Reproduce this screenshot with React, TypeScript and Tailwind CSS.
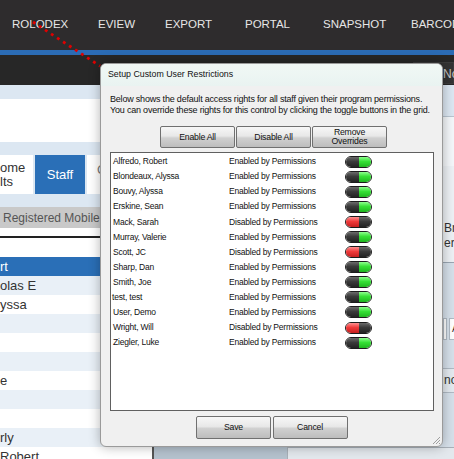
import React from 'react';

const staff: [string, boolean][] = [
  ['Alfredo, Robert', true],
  ['Blondeaux, Alyssa', true],
  ['Bouvy, Alyssa', true],
  ['Erskine, Sean', true],
  ['Mack, Sarah', false],
  ['Murray, Valerie', true],
  ['Scott, JC', false],
  ['Sharp, Dan', true],
  ['Smith, Joe', true],
  ['test, test', true],
  ['User, Demo', true],
  ['Wright, Will', false],
  ['Ziegler, Luke', true],
];

const nav: [string, string][] = [
  ['ROLODEX', 'w-[86px]'],
  ['EVIEW', 'w-[67px]'],
  ['EXPORT', 'w-[80px]'],
  ['PORTAL', 'w-[78px]'],
  ['SNAPSHOT', 'w-[88px]'],
  ['BARCODE', 'w-[90px]'],
];

const leftRows = ['rt', 'olas E', 'yssa', '', '', '', 'e', '', '', 'rly', 'Robert'];

const darkHalf = 'bg-[linear-gradient(to_bottom,#6a6a6a,#3a3a3a_45%,#222222)]';
const greenHalf = 'bg-[linear-gradient(to_bottom,#8cff8c,#35e035_45%,#1fb51f)]';
const redHalf = 'bg-[linear-gradient(to_bottom,#ff9090,#f03a3a_45%,#c41f1f)]';

function Toggle({ on }: { on: boolean }) {
  return (
    <div className="flex h-[12px] w-[27px] overflow-hidden rounded-full border border-[#1c1c1c]">
      <div className={`w-1/2 ${on ? darkHalf : redHalf}`} />
      <div className={`w-1/2 ${on ? greenHalf : darkHalf}`} />
    </div>
  );
}

function WinButton({ children }: { children: React.ReactNode }) {
  return (
    <button className="flex h-full w-[75px] items-center justify-center rounded-[2px] border border-[#707070] bg-[linear-gradient(to_bottom,#f7f7f7,#e8e8e8_45%,#d0d0d0_55%,#bdbdbd)] text-center text-[8.7px] leading-[9px] text-[#111]">
      {children}
    </button>
  );
}

export default function App() {
  return (
    <div className="relative h-[459px] w-[454px] overflow-hidden bg-white font-['Liberation_Sans',sans-serif]">
      {/* top nav */}
      <div className="flex h-[50px] items-center bg-[#2e2c2d] pl-[12px] text-[11.5px] text-[#e6e6e6]">
        {nav.map(([label, w]) => (
          <div key={label} className={`shrink-0 ${w}`}>{label}</div>
        ))}
      </div>
      <div className="h-[5px] bg-[#2b6cb5]" />
      <div className="flex h-[30px] justify-end bg-[#272727]">
        <div className="mt-[7px] h-[22px] w-[41px] border border-[#3c3c3c] bg-[#333333] pl-[29px] pt-[4px] text-[12px] leading-[14px] text-[#c8c8c8]">No</div>
      </div>
      <div className="h-[14px] bg-[#dce7f2]" />

      <div className="flex">
        {/* left list panel */}
        <div className="w-[152px] shrink-0 text-[13px] text-[#333]">
          <div className="h-[43px] bg-white" />
          <div className="flex h-[65px] gap-[2px] bg-[#dce7f2] pt-[13px]">
            <div className="flex h-[39px] w-[33px] flex-col justify-center bg-white leading-[14px]">
              <span>ome</span>
              <span>lts</span>
            </div>
            <div className="flex h-[39px] w-[50px] items-center justify-center bg-[#2a6fb7] text-[13px] text-white">Staff</div>
            <div className="h-[39px] w-[60px] bg-white pl-[10px] pt-[5px] text-[#777]">C</div>
          </div>
          <div className="flex h-[21px] items-center bg-[#c9c9c9] pl-[3px] text-[12px] text-[#555]">Registered Mobile</div>
          <div className="h-[8px]" />
          <div className="h-[2px] bg-[#222]" />
          <div className="h-[19px]" />
          {leftRows.map((t, i) => (
            <div
              key={i}
              className={`flex h-[19px] items-center ${i === 0 ? 'bg-[#2a6fb7] text-white' : i % 2 === 1 ? 'bg-[#e9f0f7]' : 'bg-white'}`}
            >
              {t}
            </div>
          ))}
        </div>

        {/* right detail panel (mostly hidden) */}
        <div className="flex flex-1 flex-col text-[12px] text-[#333]">
          <div className="h-[17px] bg-[#dce7f2]" />
          <div className="h-[50px] border-t border-[#b9c5d0] bg-[#f4f7fa]" />
          <div className="h-[96px] bg-[#edf1f5] pl-[292px] pt-[55px] leading-[15px]">
            <div>Br</div>
            <div>err</div>
          </div>
          <div className="h-[1px] bg-[#9aa6b2]" />
          <div className="flex h-[184px] flex-col bg-[#d6e0ea] pt-[55px]">
            <div className="flex h-[22px] gap-[2px] pl-[291px]">
              <div className="w-[4px] border border-[#b0bac4] bg-white" />
              <div className="flex-1 border border-[#b0bac4] bg-white pl-[2px] text-[10px] leading-[20px]">A</div>
            </div>
            <div className="mt-[28px] h-[25px] border-y border-[#b0bac4] bg-[#e4eaf0] pl-[292px] text-[12px] leading-[23px]">no</div>
          </div>
          <div className="flex h-[20px] border-l-2 border-[#555]">
            <div className="w-[133px] bg-[#b5c2ce]" />
            <div className="flex-1 border-l border-t border-[#a8b0b8] bg-[#e3e8ed]" />
          </div>
        </div>
      </div>

      {/* red dotted pointer */}
      <svg className="absolute left-0 top-0" width="120" height="80">
        <line x1="33" y1="22" x2="100" y2="66" stroke="#e00000" strokeWidth="2.8" strokeDasharray="2.8 4.4" />
      </svg>

      {/* dialog */}
      <div className="absolute left-[100px] top-[63px] flex h-[384px] w-[343px] flex-col overflow-hidden rounded-[6px] border border-[#9a9a9a] bg-[#f0f0f0] shadow-[0_0_12px_rgba(0,0,0,0.3)]">
        <div className="flex h-[22px] shrink-0 items-center bg-[linear-gradient(to_bottom,#f1f8f5,#e9f3f1)] pl-[7px] text-[8.8px] text-[#111]">
          Setup Custom User Restrictions
        </div>
        <div className="flex flex-1 flex-col pl-[9px] pr-[8px] text-[8.5px] tracking-[-0.2px] text-[#111]">
          <div className="mt-[8px] text-[9px] leading-[11px]">
            <div>Below shows the default access rights for all staff given their program permissions.</div>
            <div>You can override these rights for this control by clicking the toggle buttons in the grid.</div>
          </div>
          <div className="ml-[50px] mt-[10px] flex h-[22px] gap-[1px]">
            <WinButton>Enable All</WinButton>
            <WinButton>Disable All</WinButton>
            <WinButton>
              Remove
              <br />
              Overrides
            </WinButton>
          </div>
          <div className="mt-[4px] h-[259px] border border-[#606060] bg-white pt-[1px]">
            {staff.map(([name, on]) => (
              <div key={name} className="flex h-[15.1px] items-center">
                <div className={`w-[118px] shrink-0 ${name === 'test, test' ? 'pl-[1px]' : 'pl-[2px]'}`}>{name}</div>
                <div className="w-[116px] shrink-0">{on ? 'Enabled by Permissions' : 'Disabled by Permissions'}</div>
                <Toggle on={on} />
              </div>
            ))}
          </div>
          <div className="ml-[86px] mt-[5px] flex h-[23px] gap-[1.5px]">
            <WinButton>Save</WinButton>
            <WinButton>Cancel</WinButton>
          </div>
        </div>
        <svg className="absolute bottom-[1px] right-[1px]" width="10" height="10">
          <line x1="9" y1="2" x2="2" y2="9" stroke="#8a8a8a" strokeWidth="0.8" />
          <line x1="9" y1="5" x2="5" y2="9" stroke="#8a8a8a" strokeWidth="0.8" />
          <line x1="9" y1="8" x2="8" y2="9" stroke="#8a8a8a" strokeWidth="0.8" />
        </svg>
      </div>
    </div>
  );
}
